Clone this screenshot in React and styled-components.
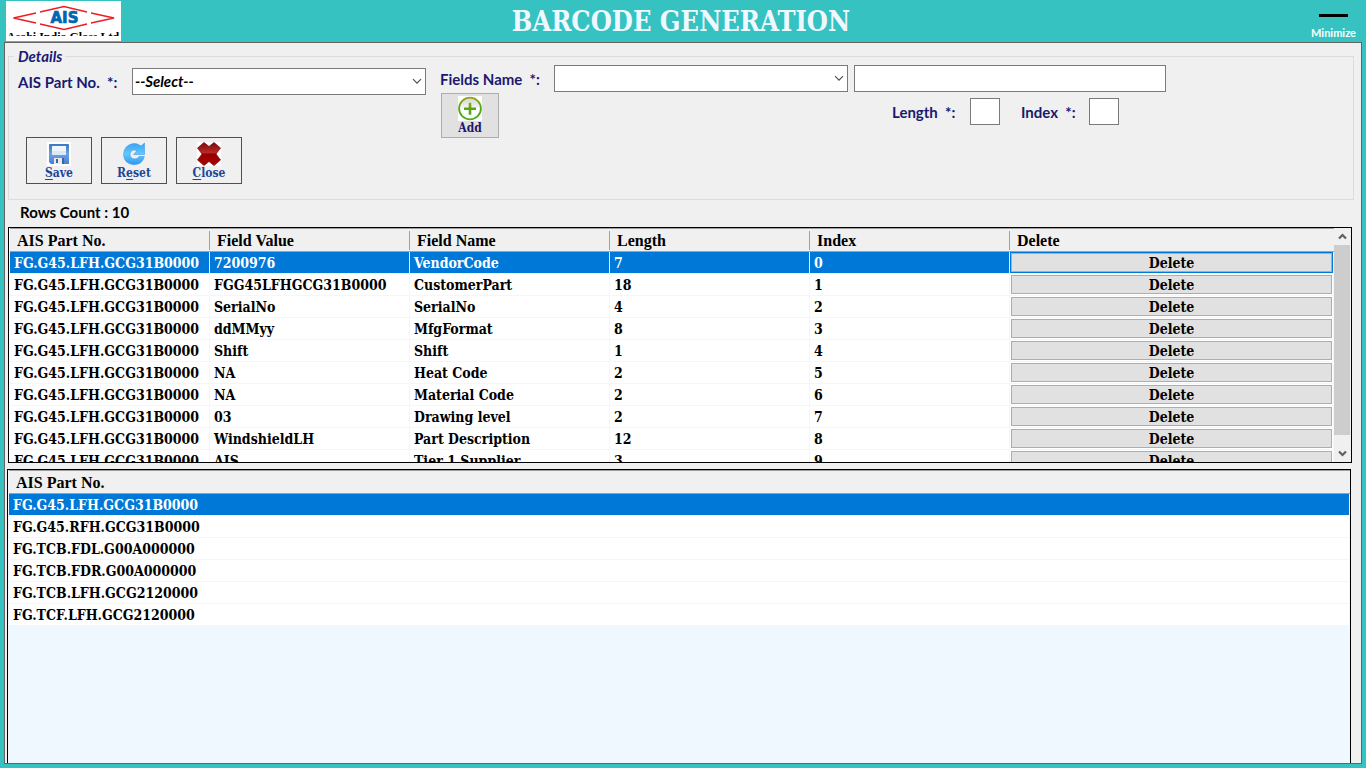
import React from "react";
import styled, { createGlobalStyle, css } from "styled-components";

const serif = `"DejaVu Serif Condensed", "DejaVu Serif", serif`;
const sans = `Lato, "Open Sans", sans-serif`;
const navy = "#191970";

const GlobalStyle = createGlobalStyle`
  *, *::before, *::after { box-sizing: border-box; }
  body { margin: 0; background: #36c2c0; font-family: ${sans}; }
  button, input, select { font: inherit; margin: 0; border-radius: 0; }
`;

const Page = styled.div`
  display: flex;
  flex-direction: column;
  height: 100vh;
  padding: 0 4px 4px;
`;

const Header = styled.header`
  display: grid;
  grid-template-columns: 116px 1fr 120px;
  align-items: center;
  flex: 0 0 42px;
  height: 42px;
`;

const Logo = styled.svg`
  display: block;
  margin-left: 2px;
  background: #fff;
`;

const Title = styled.h1`
  margin: 0;
  padding-top: 2px;
  font: bold 27px/40px ${serif};
  color: #f0f8ff;
  text-align: center;
  white-space: nowrap;
`;

const MinimizeButton = styled.button`
  display: flex;
  flex-direction: column;
  align-items: center;
  gap: 8px;
  align-self: end;
  justify-self: end;
  padding: 0;
  margin: 0 6px 1px 0;
  border: 0;
  background: none;
  color: #fff;
  font-size: 11px;
  font-weight: bold;
  line-height: 16px;

  &::before {
    content: "";
    width: 29px;
    height: 3px;
    background: #000;
  }
`;

const Window = styled.main`
  display: flex;
  flex-direction: column;
  flex: 1;
  min-height: 0;
  padding: 4px 7px 0 3px;
  border: 1px solid #646464;
  background: #f0f0f0;
  overflow: hidden;
`;

const Details = styled.fieldset`
  display: flex;
  gap: 14px;
  min-width: 0;
  margin: 0;
  padding: 0 9px 15px;
  border: 1px solid #dcdcdc;
`;

const Legend = styled.legend`
  padding: 0 3px 0 4px;
  margin-left: -4px;
  color: ${navy};
  font-size: 15px;
  font-weight: bold;
  font-style: italic;
  line-height: 18px;
`;

const PartColumn = styled.div`
  display: flex;
  flex-direction: column;
  gap: 42px;
  padding-top: 3px;
`;

const FieldColumn = styled.div`
  display: flex;
  flex-direction: column;
  gap: 1px;
`;

const Line = styled.div`
  display: flex;
  align-items: center;
  gap: ${(p) => p.$gap || 0}px;
`;

const EntryLine = styled(Line)`
  align-items: flex-start;
  padding-left: 1px;
`;

const ActionBar = styled(Line)`
  padding-left: 8px;
`;

const Label = styled.label`
  width: ${(p) => p.$width}px;
  padding-top: 2px;
  color: ${navy};
  font-size: 15px;
  font-weight: bold;
  line-height: 25px;
  white-space: pre;
`;

const SelectBox = styled.span`
  position: relative;
  display: block;
  width: 294px;

  svg {
    position: absolute;
    right: 4px;
    top: 10px;
    pointer-events: none;
  }
`;

const Select = styled.select`
  display: block;
  width: 100%;
  height: 27px;
  padding: 0 20px 2px 2px;
  appearance: none;
  border: 1px solid #7a7a7a;
  background: #fff;
  color: #000;
  font-size: 15px;
  font-weight: bold;
  font-style: italic;
`;

const TextInput = styled.input`
  width: ${(p) => p.$width}px;
  height: 27px;
  padding: 0 4px;
  border: 1px solid #7a7a7a;
  background: #fff;
  font-size: 15px;
  font-weight: bold;
`;

const SizeFields = styled.div`
  display: flex;
  gap: 21px;
  padding-top: 5px;
  margin-left: 393px;
`;

const IconButton = styled.button`
  display: flex;
  flex-direction: column;
  align-items: center;
  width: 66px;
  height: 47px;
  padding: 4px 0 0;
  border: 1px solid #505050;
  background: #f0f0f0;
  color: #1c4796;
  font: bold 12px/15px ${serif};

  svg { display: block; flex: none; }
  u { text-underline-offset: 2px; }

  ${(p) =>
    p.$raised &&
    css`
      width: 58px;
      height: 45px;
      padding-top: 2px;
      border-color: #adadad;
      background: #e1e1e1;
      color: ${navy};
    `}
`;

const RowsCount = styled.p`
  margin: 0;
  padding: 0 12px;
  font-size: 15px;
  font-weight: bold;
  line-height: 24px;
  height: 27px;
`;

const Grid = styled.section`
  display: flex;
  flex: 0 0 236px;
  min-height: 0;
  margin-right: 2px;
  border: 1px solid #000;
  background: #fff;
  overflow: hidden;
`;

const PartGrid = styled(Grid)`
  flex: 1 1 0;
  margin: 6px 3px 0 -1px;
  border-bottom: 0;
  background: #f0f8ff;
`;

const TablePane = styled.div`
  flex: 1;
  min-width: 0;
  padding-left: 1px;
  overflow: hidden;
`;

const Table = styled.table`
  width: 100%;
  table-layout: fixed;
  border-collapse: separate;
  border-spacing: 0;
  font: bold 14px/19px ${serif};
  color: #000;
`;

const HeadCell = styled.th`
  width: ${(p) => (p.$last ? "auto" : "200px")};
  height: 24px;
  padding: 1px 7px 0;
  border: solid #a0a0a0;
  border-width: 1px 0;
  background: ${(p) =>
    p.$last
      ? "#f0f0f0"
      : "linear-gradient(#a0a0a0, #a0a0a0) right center / 1px 19px no-repeat #f0f0f0"};
  font: bold 16px/20px "Liberation Serif", serif;
  text-align: left;
`;

const Cell = styled.td`
  height: 22px;
  padding: 2px 4px 0;
  border: solid #f0f8ff;
  border-width: 0 1px 1px 0;
  background: #fff;
  background-clip: padding-box;
  white-space: nowrap;
  overflow: hidden;

  tr[aria-selected="true"] & {
    background-color: #0078d7;
    color: #fff;
  }
`;

const ButtonCell = styled(Cell)`
  padding: 1px;
`;

const DeleteButton = styled.button`
  display: block;
  width: 100%;
  height: 19px;
  padding: 0;
  border: 1px solid #adadad;
  background: #e1e1e1;
  color: #000;
  font: bold 14px/16px ${serif};
`;

const ScrollBar = styled.div`
  display: flex;
  flex-direction: column;
  flex: 0 0 17px;
  padding-right: 1px;
  background: #f0f0f0;
`;

const ScrollButton = styled.button`
  display: flex;
  align-items: center;
  justify-content: center;
  height: 17px;
  padding: 0;
  border: 0;
  background: none;
`;

const Thumb = styled.div`
  flex: 1;
  margin-bottom: 10px;
  background: #cdcdcd;
`;

const Chevron = () => (
  <svg width="10" height="7" viewBox="0 0 10 7" aria-hidden="true">
    <path d="M1 1.2 L5 5.2 L9 1.2" fill="none" stroke="#505050" strokeWidth="1.2" />
  </svg>
);

const Arrow = ({ up }) => (
  <svg width="9" height="7" viewBox="0 0 9 7" aria-hidden="true">
    <path
      d={up ? "M1 5.5 L4.5 2 L8 5.5" : "M1 1.5 L4.5 5 L8 1.5"}
      fill="none"
      stroke="#606060"
      strokeWidth="2.2"
    />
  </svg>
);

const AddIcon = () => (
  <svg width="24" height="25" viewBox="0 0 24 25" aria-hidden="true">
    <defs>
      <linearGradient id="addFill" x1="0" y1="0" x2="0" y2="1">
        <stop offset="0" stopColor="#d4d4d4" />
        <stop offset="0.6" stopColor="#fff" />
      </linearGradient>
      <linearGradient id="addRing" x1="0" y1="0" x2="0" y2="1">
        <stop offset="0" stopColor="#96a71b" />
        <stop offset="0.4" stopColor="#55a90c" />
        <stop offset="1" stopColor="#4caa20" />
      </linearGradient>
    </defs>
    <rect width="24" height="25" fill="#fff" />
    <circle cx="12" cy="12.5" r="10.9" fill="url(#addFill)" stroke="url(#addRing)" strokeWidth="1.8" />
    <path d="M6 11.5h4.700V6.700h2.600v4.800H18v2.500h-4.700v4.800h-2.600V14H6z" fill="url(#addRing)" />
  </svg>
);

const SaveIcon = () => (
  <svg width="24" height="24" viewBox="0 0 24 24" aria-hidden="true">
    <defs>
      <linearGradient id="saveFill" x1="0" y1="0" x2="0" y2="1">
        <stop offset="0" stopColor="#3f78bd" />
        <stop offset="0.5" stopColor="#6da0e6" />
        <stop offset="1" stopColor="#4a7fd0" />
      </linearGradient>
    </defs>
    <rect width="24" height="24" fill="#fff" />
    <path d="M2 3q0-1 1-1h18q1 0 1 1v19H4l-2-2z" fill="url(#saveFill)" />
    <rect x="5" y="4" width="14" height="9" fill="#eef5fc" />
    <path d="M5 9h14v4H5z" fill="#dbe8f6" />
    <rect x="7" y="16" width="8" height="6" fill="#e8e9ec" />
    <rect x="9" y="17" width="2" height="4" fill="#39679f" />
    <rect x="15" y="16" width="2" height="6" fill="#3165ad" />
  </svg>
);

const ResetIcon = () => (
  <svg width="24" height="24" viewBox="0 0 24 24" aria-hidden="true">
    <defs>
      <linearGradient id="resetFill" x1="0" y1="0" x2="0" y2="1">
        <stop offset="0" stopColor="#3ba0f4" />
        <stop offset="0.5" stopColor="#62c8ff" />
        <stop offset="1" stopColor="#2e96f0" />
      </linearGradient>
    </defs>
    <path
      d="M22.500 1v11.500h-11l3.500-3.800Q9.500 6.500 8 11.500Q7.800 16.500 12.500 17Q15.500 17 17 14.500h5.300Q20.500 22.500 12 22.700Q2 22 1.500 12.500Q2 3 11.500 1.500Q16 1.200 19 4z"
      fill="url(#resetFill)"
      stroke="#3c9ae8"
      strokeWidth="0.600"
    />
  </svg>
);

const CloseIcon = () => (
  <svg width="24" height="24" viewBox="0 0 24 24" aria-hidden="true">
    <defs>
      <linearGradient id="closeFill" x1="0" y1="0" x2="0" y2="1">
        <stop offset="0" stopColor="#7d0b0b" />
        <stop offset="0.450" stopColor="#b92a2a" />
        <stop offset="0.500" stopColor="#980000" />
        <stop offset="1" stopColor="#a80505" />
      </linearGradient>
    </defs>
    <rect width="24" height="24" fill="#fff" />
    <path
      d="M7 0.500 L12 4.500 L17 0.500 L23.500 6 L19 12 L23.500 18 L17 23.500 L12 19.500 L7 23.500 L0.500 18 L5 12 L0.500 6 Z"
      fill="url(#closeFill)"
      stroke="#7c0505"
      strokeWidth="0.700"
      strokeLinejoin="round"
    />
  </svg>
);

const CompanyLogo = () => (
  <Logo width="115" height="40" viewBox="0 0 115 40" role="img" aria-label="AIS Asahi India Glass Ltd">
    <defs>
      <clipPath id="captionClip">
        <rect x="0" y="30" width="115" height="5" />
      </clipPath>
    </defs>
    <g fill="none" stroke="#ed1c24" strokeWidth="1.300">
      <path d="M34 11 L58 5.500 L81 11" />
      <path d="M34 23 L58 28.500 L81 23" />
      <path d="M30 12 L7.500 17 L30 22" />
      <path d="M85 12 L108 17 L85 22" />
    </g>
    <text x="58.500" y="22" textAnchor="middle" fontFamily="DejaVu Sans" fontWeight="bold" fontSize="15" fill="#0066b3" stroke="#0066b3" strokeWidth="0.700">
      AIS
    </text>
    <text x="57" y="40" textAnchor="middle" fontFamily="Liberation Serif" fontWeight="bold" fontSize="12" fill="#000" clipPath="url(#captionClip)">
      Asahi India Glass Ltd
    </text>
  </Logo>
);

const fieldColumns = ["AIS Part No.", "Field Value", "Field Name", "Length", "Index", "Delete"];

const fieldRows = [
  ["7200976", "VendorCode", 7],
  ["FGG45LFHGCG31B0000", "CustomerPart", 18],
  ["SerialNo", "SerialNo", 4],
  ["ddMMyy", "MfgFormat", 8],
  ["Shift", "Shift", 1],
  ["NA", "Heat Code", 2],
  ["NA", "Material Code", 2],
  ["03", "Drawing level", 2],
  ["WindshieldLH", "Part Description", 12],
  ["AIS", "Tier 1 Supplier", 3],
];

const parts = [
  "FG.G45.LFH.GCG31B0000",
  "FG.G45.RFH.GCG31B0000",
  "FG.TCB.FDL.G00A000000",
  "FG.TCB.FDR.G00A000000",
  "FG.TCB.LFH.GCG2120000",
  "FG.TCF.LFH.GCG2120000",
];

export default function App() {
  return (
    <>
      <GlobalStyle />
      <Page>
        <Header>
          <CompanyLogo />
          <Title>BARCODE GENERATION</Title>
          <MinimizeButton type="button">Minimize</MinimizeButton>
        </Header>
        <Window>
          <Details>
            <Legend>Details</Legend>
            <PartColumn>
              <Line>
                <Label htmlFor="part" $width={114}>{"AIS Part No.  *:"}</Label>
                <SelectBox>
                  <Select id="part">
                    <option>--Select--</option>
                  </Select>
                  <Chevron />
                </SelectBox>
              </Line>
              <ActionBar $gap={9}>
                <IconButton type="button">
                  <SaveIcon />
                  <span><u>S</u>ave</span>
                </IconButton>
                <IconButton type="button">
                  <ResetIcon />
                  <span>R<u>e</u>set</span>
                </IconButton>
                <IconButton type="button">
                  <CloseIcon />
                  <span><u>C</u>lose</span>
                </IconButton>
              </ActionBar>
            </PartColumn>
            <FieldColumn>
              <Line>
                <Label htmlFor="field" $width={114}>{"Fields Name  *:"}</Label>
                <Line $gap={6}>
                  <SelectBox>
                    <Select id="field">
                      <option aria-label="None" />
                    </Select>
                    <Chevron />
                  </SelectBox>
                  <TextInput $width={312} type="text" aria-label="Field value" />
                </Line>
              </Line>
              <EntryLine>
                <IconButton type="button" $raised>
                  <AddIcon />
                  Add
                </IconButton>
                <SizeFields>
                  <Line>
                    <Label htmlFor="length" $width={78}>{"Length  *:"}</Label>
                    <TextInput id="length" $width={30} type="text" />
                  </Line>
                  <Line>
                    <Label htmlFor="index" $width={68}>{"Index  *:"}</Label>
                    <TextInput id="index" $width={30} type="text" />
                  </Line>
                </SizeFields>
              </EntryLine>
            </FieldColumn>
          </Details>
          <RowsCount>Rows Count : 10</RowsCount>
          <Grid>
            <TablePane>
              <Table>
                <thead>
                  <tr>
                    {fieldColumns.map((name, i) => (
                      <HeadCell key={name} $last={i === fieldColumns.length - 1}>{name}</HeadCell>
                    ))}
                  </tr>
                </thead>
                <tbody>
                  {fieldRows.map(([value, name, length], i) => (
                    <tr key={i} aria-selected={i === 0}>
                      <Cell>{parts[0]}</Cell>
                      <Cell>{value}</Cell>
                      <Cell>{name}</Cell>
                      <Cell>{length}</Cell>
                      <Cell>{i}</Cell>
                      <ButtonCell>
                        <DeleteButton type="button">Delete</DeleteButton>
                      </ButtonCell>
                    </tr>
                  ))}
                </tbody>
              </Table>
            </TablePane>
            <ScrollBar>
              <ScrollButton type="button" aria-label="Scroll up"><Arrow up /></ScrollButton>
              <Thumb />
              <ScrollButton type="button" aria-label="Scroll down"><Arrow /></ScrollButton>
            </ScrollBar>
          </Grid>
          <PartGrid>
            <TablePane>
              <Table>
                <thead>
                  <tr><HeadCell $last>AIS Part No.</HeadCell></tr>
                </thead>
                <tbody>
                  {parts.map((part, i) => (
                    <tr key={part} aria-selected={i === 0}>
                      <Cell>{part}</Cell>
                    </tr>
                  ))}
                </tbody>
              </Table>
            </TablePane>
          </PartGrid>
        </Window>
      </Page>
    </>
  );
}
